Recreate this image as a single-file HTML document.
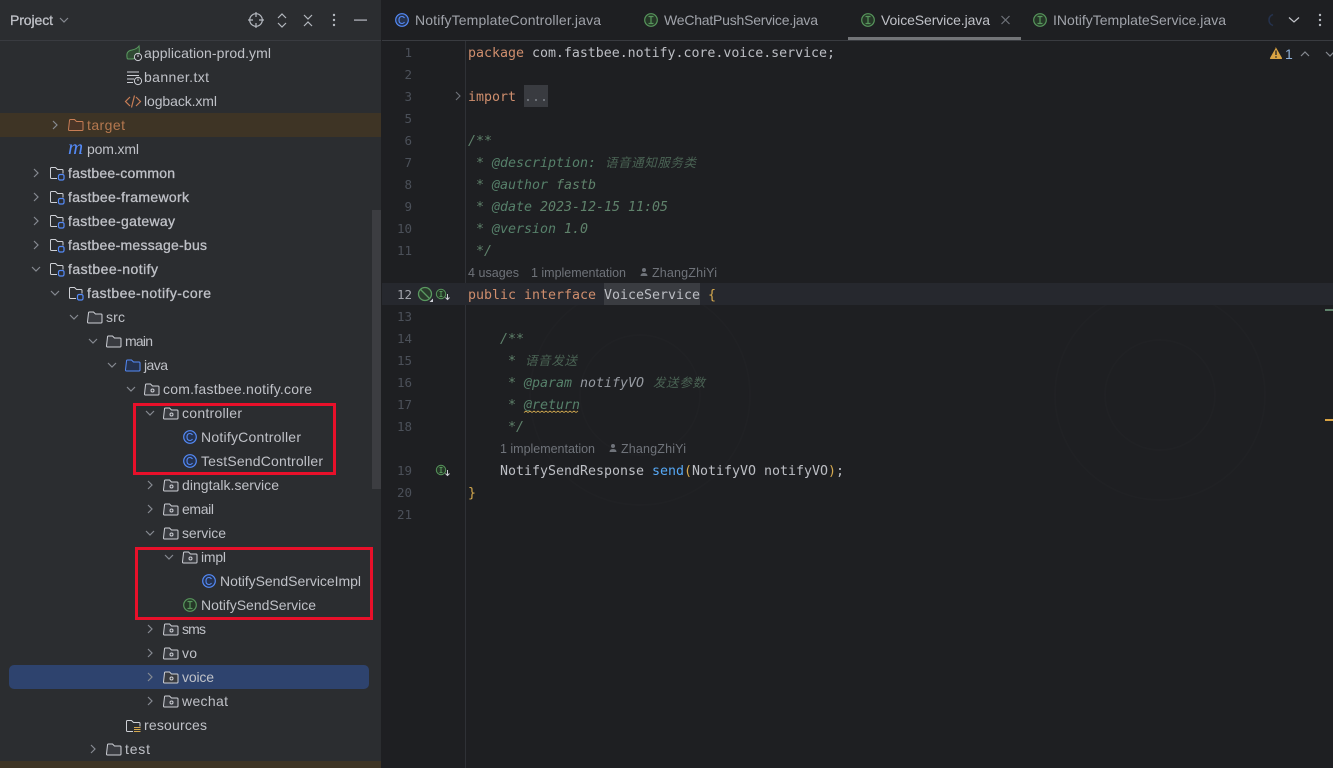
<!DOCTYPE html>
<html lang="en">
<head>
<meta charset="utf-8">
<title>VoiceService.java</title>
<style>
html,body{margin:0;padding:0;background:#1e1f22;width:1333px;height:768px;overflow:hidden}
svg{display:block}
.t{font-family:"Liberation Sans","Noto Sans CJK SC",sans-serif;font-size:14px;fill:#bfc1c7}
.b{stroke:#bfc1c7;stroke-width:.3px}
.o{fill:#b5784f}
.tab{fill:#a0a3aa}
.m{font-family:"DejaVu Sans Mono","Liberation Mono",monospace;font-size:13.3px;fill:#bcbec4}
.k{fill:#cf8e6d}
.y{fill:#d5a94f}
.f{fill:#56a8f5}
.d{fill:#5f826b;font-style:italic}
.dd{fill:#969aa1;font-style:italic}
.dg{fill:#56806a;font-style:italic}
.c{font-family:"Liberation Sans","Noto Sans CJK SC",sans-serif;font-size:12.5px;fill:#4a6354;font-style:italic}
.n{font-family:"DejaVu Sans Mono","Liberation Mono",monospace;font-size:12.5px;fill:#4b5059;text-anchor:end}
.h{font-family:"Liberation Sans",sans-serif;font-size:12.5px;fill:#6f737a}
.ch{fill:none;stroke:#868a91;stroke-width:1.2}
.ic{fill:none;stroke:#b4b8bf;stroke-width:1.2}
.fo{fill:#393b40;stroke:#ced0d6;stroke-width:1}
</style>
</head>
<body>
<svg width="1333" height="768" viewBox="0 0 1333 768" xmlns="http://www.w3.org/2000/svg">
<!-- backgrounds -->
<rect x="0" y="0" width="1333" height="768" fill="#1e1f22"/>
<rect x="0" y="0" width="381" height="768" fill="#2b2d30"/>
<rect x="381" y="0" width="1" height="768" fill="#1e1f22"/>
<rect x="0" y="40" width="381" height="1" fill="#393b40"/>
<rect x="382" y="40" width="951" height="1" fill="#393b40"/>

<!-- faint watermark -->
<g fill="none" stroke="#202124" stroke-width="2">
<circle cx="640" cy="395" r="110"/><circle cx="640" cy="395" r="60"/>
<circle cx="1160" cy="395" r="105"/><circle cx="1160" cy="395" r="55"/>
</g>

<!-- tree row highlights -->
<rect x="0" y="113" width="381" height="24" fill="#3e3425"/>
<rect x="0" y="761" width="381" height="7" fill="#3e3425"/>
<rect x="9" y="665" width="360" height="24" rx="5" fill="#2e436e"/>
<rect x="372" y="210" width="9" height="279" fill="#3c3d41"/>

<!-- project header -->
<text class="t b" x="10" y="25" textLength="43">Project</text>
<path class="ch" d="M60 18l4 4 4-4"/>
<g class="ic">
<circle cx="256" cy="20" r="6.3"/><path d="M256 12v5M256 23v5M248 20h5M259 20h5"/>
<path d="M278 18l4-4 4 4M278 23l4 4 4-4"/>
<path d="M304 15l4 4 4-4M304 26l4-4 4 4"/>
</g>
<g fill="#b4b8bf"><circle cx="334" cy="15" r="1.2"/><circle cx="334" cy="20" r="1.2"/><circle cx="334" cy="25" r="1.2"/></g>
<rect x="354" y="19.4" width="13" height="1.4" fill="#a4a7ae"/>

<!-- tree top file icons -->
<path d="M127 57q-1-6 5-7 5-1 7-4 1 7-1 10-3 3-6 3h-4q-1 0-1-2z" fill="#2f4a33" stroke="#5a9a60" stroke-width="1"/>
<circle cx="138" cy="57" r="3.6" fill="#2b2d30" stroke="#ced0d6"/><path d="M138 54.5v2.5" stroke="#ced0d6"/>
<path d="M127 72h12M127 75.5h12M127 79h7M127 82.500h6" stroke="#ced0d6" fill="none"/>
<circle cx="138" cy="81" r="3.600" fill="#2b2d30" stroke="#ced0d6"/><path d="M138 78.500v2.500" stroke="#ced0d6"/>
<path d="M130 97l-4.500 4.500 4.500 4.500M136 97l4.500 4.500-4.500 4.500M134.500 95.500l-3 12" fill="none" stroke="#c77d55" stroke-width="1.200"/>

<!-- target -->
<path d="M69.500 120.500q0-1 1-1h4l2 2h5.500q1 0 1 1v7q0 1-1 1h-12.500q-1 0-1-1z" fill="#4a3527" stroke="#c77d55"/>
<!-- pom m -->
<text x="68" y="154" font-family="Liberation Serif,serif" font-style="italic" font-size="21" fill="#548af7">m</text>
<!-- modules -->
<g id="mod"><path d="M57 178.500h-5.500q-1 0-1-1v-9q0-1 1-1h4l2 2h4.500q1 0 1 1v3" fill="none" stroke="#ced0d6"/><rect x="58.500" y="174.500" width="5.500" height="5.500" rx="1.500" fill="#2b2d30" stroke="#548af7" stroke-width="1.200"/></g>
<use href="#mod" y="24"/><use href="#mod" y="48"/><use href="#mod" y="72"/><use href="#mod" y="96"/>
<use href="#mod" x="19" y="120"/>
<!-- src / main / test -->
<path id="fld" class="fo" d="M88.500 313q0-1 1-1h4l2 2h5.500q1 0 1 1v7q0 1-1 1h-12.500q-1 0-1-1z"/>
<use href="#fld" x="19" y="24"/>
<use href="#fld" x="19" y="432"/>
<!-- java -->
<path d="M126.500 361q0-1 1-1h4l2 2h5.500q1 0 1 1v7q0 1-1 1h-12.500q-1 0-1-1z" fill="#25324d" stroke="#548af7"/>
<!-- packages -->
<g id="pkg"><path class="fo" d="M145.500 385q0-1 1-1h4l2 2h5.500q1 0 1 1v7q0 1-1 1h-12.500q-1 0-1-1z"/><circle cx="152.500" cy="390.500" r="1.500" fill="none" stroke="#ced0d6"/></g>
<use href="#pkg" x="19" y="24"/>
<use href="#pkg" x="19" y="96"/>
<use href="#pkg" x="19" y="120"/>
<use href="#pkg" x="19" y="144"/>
<use href="#pkg" x="38" y="168"/>
<use href="#pkg" x="19" y="240"/>
<use href="#pkg" x="19" y="264"/>
<use href="#pkg" x="19" y="288"/>
<use href="#pkg" x="19" y="312"/>
<!-- resources -->
<path d="M133 731.500h-5.500q-1 0-1-1v-9q0-1 1-1h4l2 2h5.500q1 0 1 1v3" fill="none" stroke="#ced0d6"/>
<path d="M134 727.500h6.500M134 729.500h6.500M134 731.500h6.500" stroke="#d5a94f" fill="none"/>

<!-- class icons -->
<g id="cc"><circle cx="190" cy="437" r="6.300" fill="#25324d" stroke="#548af7" stroke-width="1.200"/><path d="M192.500 435q-1-1.500-2.500-1.500-3 0-3 3.500t3 3.500q1.500 0 2.500-1.500" fill="none" stroke="#548af7" stroke-width="1.100"/></g>
<use href="#cc" y="24"/>
<use href="#cc" x="19" y="144"/>
<g id="ii"><circle cx="190" cy="605" r="6.300" fill="#253627" stroke="#57965c" stroke-width="1.200"/><path d="M187.500 601.500h5M187.500 608.500h5M190 601.500v7" fill="none" stroke="#57965c" stroke-width="1.200"/></g>

<!-- tree chevrons -->
<g class="ch">
<path d="M53 121l4 4-4 4"/>
<path d="M34 169l4 4-4 4M34 193l4 4-4 4M34 217l4 4-4 4M34 241l4 4-4 4"/>
<path d="M32 267l4 4 4-4M51 291l4 4 4-4M70 315l4 4 4-4M89 339l4 4 4-4M108 363l4 4 4-4M127 387l4 4 4-4M146 411l4 4 4-4"/>
<path d="M148 481l4 4-4 4M148 505l4 4-4 4"/>
<path d="M146 531l4 4 4-4M165 555l4 4 4-4"/>
<path d="M148 625l4 4-4 4M148 649l4 4-4 4M148 673l4 4-4 4M148 697l4 4-4 4"/>
<path d="M91 745l4 4-4 4"/>
</g>

<!-- tree labels -->
<text class="t" x="144" y="58" textLength="127">application-prod.yml</text>
<text class="t" x="144" y="82" textLength="65">banner.txt</text>
<text class="t" x="144" y="106" textLength="73">logback.xml</text>
<text class="t o" x="87" y="130" textLength="38">target</text>
<text class="t" x="87" y="154" textLength="52">pom.xml</text>
<text class="t b" x="68" y="178" textLength="107">fastbee-common</text>
<text class="t b" x="68" y="202" textLength="121">fastbee-framework</text>
<text class="t b" x="68" y="226" textLength="107">fastbee-gateway</text>
<text class="t b" x="68" y="250" textLength="139">fastbee-message-bus</text>
<text class="t b" x="68" y="274" textLength="90">fastbee-notify</text>
<text class="t b" x="87" y="298" textLength="124">fastbee-notify-core</text>
<text class="t" x="106" y="322" textLength="19">src</text>
<text class="t" x="125" y="346" textLength="28">main</text>
<text class="t" x="144" y="370" textLength="24">java</text>
<text class="t" x="163" y="394" textLength="149">com.fastbee.notify.core</text>
<text class="t" x="182" y="418" textLength="60">controller</text>
<text class="t" x="201" y="442" textLength="100">NotifyController</text>
<text class="t" x="201" y="466" textLength="122">TestSendController</text>
<text class="t" x="182" y="490" textLength="97">dingtalk.service</text>
<text class="t" x="182" y="514" textLength="32">email</text>
<text class="t" x="182" y="538" textLength="44">service</text>
<text class="t" x="201" y="562" textLength="25">impl</text>
<text class="t" x="220" y="586" textLength="141">NotifySendServiceImpl</text>
<text class="t" x="201" y="610" textLength="115">NotifySendService</text>
<text class="t" x="182" y="634" textLength="24">sms</text>
<text class="t" x="182" y="658" textLength="15">vo</text>
<text class="t" x="182" y="682" textLength="32">voice</text>
<text class="t" x="182" y="706" textLength="46">wechat</text>
<text class="t" x="144" y="730" textLength="63">resources</text>
<text class="t" x="125" y="754" textLength="25">test</text>

<!-- red boxes -->
<rect x="134.500" y="404.500" width="200" height="69" fill="none" stroke="#e8102a" stroke-width="3"/>
<rect x="136.500" y="548.500" width="235" height="70" fill="none" stroke="#e8102a" stroke-width="3"/>

<!-- tabs -->
<use href="#cc" x="212" y="-417"/>
<text class="t tab" x="415" y="25" textLength="186">NotifyTemplateController.java</text>
<use href="#ii" x="461" y="-585"/>
<text class="t tab" x="664" y="25" textLength="154">WeChatPushService.java</text>
<use href="#ii" x="678" y="-585"/>
<text class="t" x="881" y="25" textLength="109">VoiceService.java</text>
<path d="M1001.500 16l8 8M1009.500 16l-8 8" stroke="#6f737a" stroke-width="1.200" fill="none"/>
<use href="#ii" x="850" y="-585"/>
<text class="t tab" x="1053" y="25" textLength="173">INotifyTemplateService.java</text>
<path d="M1273 14.500q-4 1.500-4 5.500t4 5.500" fill="none" stroke="#25324d" stroke-width="1.500"/>
<path d="M1289 17.500l5 4.500 5-4.500" fill="none" stroke="#c3c5cb" stroke-width="1.200"/>
<g fill="#b4b8bf"><circle cx="1320" cy="15" r="1.200"/><circle cx="1320" cy="20" r="1.200"/><circle cx="1320" cy="25" r="1.200"/></g>
<rect x="848" y="37" width="173" height="3" fill="#737578"/>

<!-- editor gutter -->
<rect x="465" y="41" width="1" height="727" fill="#2f3136"/>
<rect x="382" y="283" width="951" height="22" fill="#26282e"/>
<rect x="604" y="283" width="96" height="22" fill="#3a3c41"/>
<rect x="524" y="85" width="24" height="22" fill="#393b40"/>

<!-- line numbers -->
<text class="n" x="412" y="57">1</text>
<text class="n" x="412" y="79">2</text>
<text class="n" x="412" y="101">3</text>
<text class="n" x="412" y="123">5</text>
<text class="n" x="412" y="145">6</text>
<text class="n" x="412" y="167">7</text>
<text class="n" x="412" y="189">8</text>
<text class="n" x="412" y="211">9</text>
<text class="n" x="412" y="233">10</text>
<text class="n" x="412" y="255">11</text>
<text class="n" x="412" y="299" style="fill:#a1a3ab">12</text>
<text class="n" x="412" y="321">13</text>
<text class="n" x="412" y="343">14</text>
<text class="n" x="412" y="365">15</text>
<text class="n" x="412" y="387">16</text>
<text class="n" x="412" y="409">17</text>
<text class="n" x="412" y="431">18</text>
<text class="n" x="412" y="475">19</text>
<text class="n" x="412" y="497">20</text>
<text class="n" x="412" y="519">21</text>

<!-- gutter icons -->
<path d="M456 92l4 4-4 4" fill="none" stroke="#6f737a" stroke-width="1.100"/>
<circle cx="425" cy="294" r="6.500" fill="#2a3a2c" stroke="#5a9a60" stroke-width="1.300"/>
<path d="M420.500 289.500l9 9" stroke="#5a9a60" stroke-width="1.300"/>
<path d="M433 302v-3.500l-3.500 3.500z" fill="#ced0d6"/>
<g id="gi"><circle cx="441" cy="294" r="4.700" fill="#253627" stroke="#57965c"/><path d="M439.500 291.500h3M439.500 296.500h3M441 291.500v5" stroke="#57965c" fill="none"/><path d="M447.500 294v5.500M445.500 297.500l2 2 2-2" stroke="#ced0d6" fill="none"/></g>
<use href="#gi" y="176"/>

<!-- code -->
<text class="m" y="57"><tspan class="k" x="468" textLength="56">package</tspan><tspan x="532" textLength="303">com.fastbee.notify.core.voice.service;</tspan></text>
<text class="m" y="101"><tspan class="k" x="468" textLength="48">import</tspan><tspan x="524" style="fill:#7a7e85" textLength="24">...</tspan></text>
<text class="m d" x="468" y="145" textLength="24">/**</text>
<text class="m d" x="476" y="167">*</text>
<text class="m dg" x="492" y="167" textLength="104">@description:</text>
<text class="c" x="605" y="167" textLength="91">语音通知服务类</text>
<text class="m d" x="476" y="189">*</text>
<text class="m dg" x="492" y="189" textLength="56">@author</text>
<text class="m d" x="556" y="189" textLength="40">fastb</text>
<text class="m d" x="476" y="211">*</text>
<text class="m dg" x="492" y="211" textLength="40">@date</text>
<text class="m d" x="540" y="211" textLength="128">2023-12-15 11:05</text>
<text class="m d" x="476" y="233">*</text>
<text class="m dg" x="492" y="233" textLength="64">@version</text>
<text class="m d" x="564" y="233" textLength="24">1.0</text>
<text class="m d" x="476" y="255" textLength="16">*/</text>

<text class="h" x="468" y="277" textLength="51">4 usages</text>
<text class="h" x="531" y="277" textLength="95">1 implementation</text>
<g fill="#6f737a"><circle cx="644" cy="270" r="2"/><path d="M640.500 276q0-3 3.500-3t3.500 3z"/></g>
<text class="h" x="652" y="277" textLength="65">ZhangZhiYi</text>

<text class="m" y="299"><tspan class="k" x="468" textLength="48">public</tspan><tspan class="k" x="524" textLength="72">interface</tspan><tspan x="604" textLength="96">VoiceService</tspan><tspan class="y" x="708">{</tspan></text>

<text class="m d" x="500" y="343" textLength="24">/**</text>
<text class="m d" x="508" y="365">*</text>
<text class="c" x="525" y="365" textLength="52">语音发送</text>
<text class="m d" x="508" y="387">*</text>
<text class="m dg" x="524" y="387" textLength="48">@param</text>
<text class="m dd" x="580" y="387" textLength="64">notifyVO</text>
<text class="c" x="653" y="387" textLength="52">发送参数</text>
<text class="m d" x="508" y="409">*</text>
<text class="m dg" x="524" y="409" textLength="56">@return</text>
<path d="M524 412.500l2-1.500 2 1.500 2-1.500 2 1.500 2-1.500 2 1.500 2-1.500 2 1.500 2-1.500 2 1.500 2-1.500 2 1.500 2-1.500 2 1.500 2-1.500 2 1.500 2-1.500 2 1.500 2-1.500 2 1.500 2-1.500 2 1.500 2-1.500 2 1.500 2-1.500 2 1.500 2-1.500" fill="none" stroke="#c9a24e" stroke-width=".8"/>
<text class="m d" x="508" y="431" textLength="16">*/</text>

<text class="h" x="500" y="453" textLength="95">1 implementation</text>
<g fill="#6f737a"><circle cx="613" cy="446" r="2"/><path d="M609.500 452q0-3 3.500-3t3.500 3z"/></g>
<text class="h" x="621" y="453" textLength="65">ZhangZhiYi</text>

<text class="m" y="475"><tspan x="500" textLength="144">NotifySendResponse</tspan><tspan class="f" x="652" textLength="32">send</tspan><tspan class="y" x="684">(</tspan><tspan x="692" textLength="64">NotifyVO</tspan><tspan x="764" textLength="64">notifyVO</tspan><tspan class="y" x="828">)</tspan><tspan x="836">;</tspan></text>
<text class="m y" x="468" y="497">}</text>

<!-- inspection widget -->
<path d="M1276 47.500l-6 10.500q-.3 1 .7 1h10.600q1 0 .7-1l-6-10.500q-.5-.8-1 0z" fill="#d9a343"/>
<path d="M1276 50.500v4.500M1276 56.300v1.500" stroke="#1e1f22" stroke-width="1.300"/>
<text class="t" x="1285" y="59" textLength="6" style="fill:#8fb0d8">1</text>
<path d="M1301 56l4-4 4 4M1326 52l4 4 4-4" fill="none" stroke="#868a91" stroke-width="1.200"/>

<!-- error stripes -->
<rect x="1325" y="309" width="8" height="2" fill="#5f826b"/>
<rect x="1325" y="419" width="8" height="2" fill="#d9a343"/>
</svg>
</body>
</html>
